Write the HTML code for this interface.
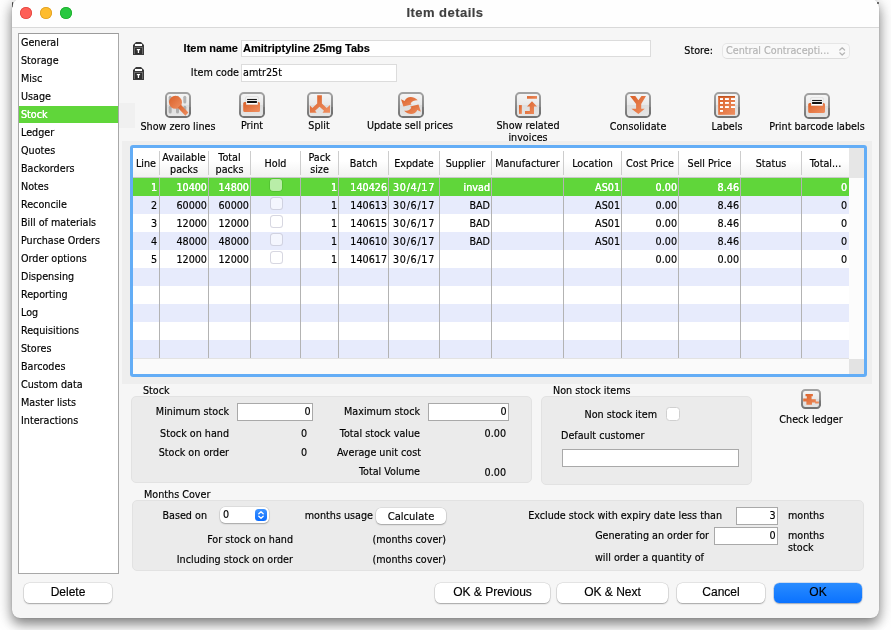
<!DOCTYPE html>
<html><head><meta charset="utf-8"><title>Item details</title><style>
html,body{margin:0;padding:0;}
body{width:891px;height:630px;background:#fff;position:relative;overflow:hidden;font-family:"DejaVu Sans Condensed", "Liberation Sans", sans-serif;font-size:10.7px;color:#000;}
#win{position:absolute;left:12px;top:-2px;width:867px;height:620px;background:#f6f6f6;border-radius:10px 10px 8px 8px;box-shadow:0 0 1px rgba(0,0,0,0.35),0 6px 12px rgba(0,0,0,0.42),0 2px 20px rgba(0,0,0,0.18);overflow:hidden;}
#titlebar{position:absolute;left:0;top:0;width:867px;height:29px;background:#fefefe;border-bottom:1px solid #d9d9d9;}
.t{position:absolute;white-space:nowrap;overflow:visible;-webkit-text-stroke:0.16px;}
#root{position:absolute;left:0;top:0;width:891px;height:630px;will-change:transform;}
</style></head><body>
<div id="root">
<div id="win">
<div id="titlebar"></div>
</div>
<div style="position:absolute;left:20px;top:7px;width:12px;height:12px;border-radius:50%;background:#fe5f57;box-shadow:inset 0 0 0 0.8px #e2463f;"></div>
<div style="position:absolute;left:40px;top:7px;width:12px;height:12px;border-radius:50%;background:#febc2e;box-shadow:inset 0 0 0 0.8px #dfa023;"></div>
<div style="position:absolute;left:60px;top:7px;width:12px;height:12px;border-radius:50%;background:#28c840;box-shadow:inset 0 0 0 0.8px #1dad2b;"></div>
<div class="t " style="left:345px;top:5px;width:200px;height:16px;line-height:16px;text-align:center;font-weight:bold;font-size:13px;color:#404040;letter-spacing:0.45px;font-family:'Liberation Sans',sans-serif;">Item details</div>
<svg style="position:absolute;left:10px;top:0px" width="6" height="10" viewBox="0 0 6 10"><path d="M2 2.400Q2.600 1.600 3.300 2.200L2.700 7.300L2.100 7.300Z" fill="#2a2a2a" opacity="0.85"/></svg>
<div style="position:absolute;left:877px;top:1.5px;width:2px;height:2px;background:rgba(0,0,0,0.7);border-radius:1px;"></div>
<div style="position:absolute;left:119px;top:103px;width:16px;height:25px;background:#f0f0f0;"></div>
<div style="position:absolute;left:122px;top:141px;width:750px;height:243px;background:#eeeeee;"></div>
<div style="position:absolute;left:18px;top:33px;width:101px;height:541px;background:#fff;border:1px solid #a8a8a8;border-top-color:#9c9c9c;box-sizing:border-box;"></div>
<div class="t " style="left:21px;top:34px;width:95px;height:18px;line-height:18px;text-align:left;">General</div>
<div class="t " style="left:21px;top:52px;width:95px;height:18px;line-height:18px;text-align:left;">Storage</div>
<div class="t " style="left:21px;top:70px;width:95px;height:18px;line-height:18px;text-align:left;">Misc</div>
<div class="t " style="left:21px;top:88px;width:95px;height:18px;line-height:18px;text-align:left;">Usage</div>
<div style="position:absolute;left:19px;top:106px;width:99px;height:17px;background:#60d63a;"></div>
<div class="t " style="left:21px;top:106px;width:95px;height:18px;line-height:18px;text-align:left;color:#fff;text-shadow:0 0 0.6px #fff;">Stock</div>
<div class="t " style="left:21px;top:124px;width:95px;height:18px;line-height:18px;text-align:left;">Ledger</div>
<div class="t " style="left:21px;top:142px;width:95px;height:18px;line-height:18px;text-align:left;">Quotes</div>
<div class="t " style="left:21px;top:160px;width:95px;height:18px;line-height:18px;text-align:left;">Backorders</div>
<div class="t " style="left:21px;top:178px;width:95px;height:18px;line-height:18px;text-align:left;">Notes</div>
<div class="t " style="left:21px;top:196px;width:95px;height:18px;line-height:18px;text-align:left;">Reconcile</div>
<div class="t " style="left:21px;top:214px;width:95px;height:18px;line-height:18px;text-align:left;">Bill of materials</div>
<div class="t " style="left:21px;top:232px;width:95px;height:18px;line-height:18px;text-align:left;">Purchase Orders</div>
<div class="t " style="left:21px;top:250px;width:95px;height:18px;line-height:18px;text-align:left;">Order options</div>
<div class="t " style="left:21px;top:268px;width:95px;height:18px;line-height:18px;text-align:left;">Dispensing</div>
<div class="t " style="left:21px;top:286px;width:95px;height:18px;line-height:18px;text-align:left;">Reporting</div>
<div class="t " style="left:21px;top:304px;width:95px;height:18px;line-height:18px;text-align:left;">Log</div>
<div class="t " style="left:21px;top:322px;width:95px;height:18px;line-height:18px;text-align:left;">Requisitions</div>
<div class="t " style="left:21px;top:340px;width:95px;height:18px;line-height:18px;text-align:left;">Stores</div>
<div class="t " style="left:21px;top:358px;width:95px;height:18px;line-height:18px;text-align:left;">Barcodes</div>
<div class="t " style="left:21px;top:376px;width:95px;height:18px;line-height:18px;text-align:left;">Custom data</div>
<div class="t " style="left:21px;top:394px;width:95px;height:18px;line-height:18px;text-align:left;">Master lists</div>
<div class="t " style="left:21px;top:412px;width:95px;height:18px;line-height:18px;text-align:left;">Interactions</div>
<svg style="position:absolute;left:133px;top:42px" width="11" height="13" viewBox="0 0 11 13"><path d="M3 0h5l3 3v10H0V3z" fill="#3a3a3a"/><rect x="2" y="2" width="7" height="2" fill="#fff"/><rect x="1" y="5" width="9" height="7" fill="#6a6a6a"/><rect x="2" y="6" width="7" height="6" fill="#2e2e2e"/><path d="M3.800 7h3.300v1.200h-1v2.700h-1.300v-2.700h-1z" fill="#fff"/></svg>
<svg style="position:absolute;left:133px;top:67px" width="11" height="13" viewBox="0 0 11 13"><path d="M3 0h5l3 3v10H0V3z" fill="#3a3a3a"/><rect x="2" y="2" width="7" height="2" fill="#fff"/><rect x="1" y="5" width="9" height="7" fill="#6a6a6a"/><rect x="2" y="6" width="7" height="6" fill="#2e2e2e"/><path d="M3.800 7h3.300v1.200h-1v2.700h-1.300v-2.700h-1z" fill="#fff"/></svg>
<div class="t " style="left:150px;top:41px;width:88px;height:15px;line-height:15px;text-align:right;font-weight:bold;font-family:'Liberation Sans',sans-serif;font-size:11px;">Item name</div>
<div class="t " style="left:151px;top:65px;width:88px;height:15px;line-height:15px;text-align:right;">Item code</div>
<div style="position:absolute;left:241px;top:40px;width:410px;height:17px;background:#fff;border:1px solid #dcdcdc;box-sizing:border-box;"></div>
<div class="t " style="left:243px;top:41px;width:300px;height:15px;line-height:15px;text-align:left;font-weight:bold;font-family:'Liberation Sans',sans-serif;font-size:11px;">Amitriptyline 25mg Tabs</div>
<div style="position:absolute;left:241px;top:64px;width:156px;height:18px;background:#fff;border:1px solid #dcdcdc;box-sizing:border-box;"></div>
<div class="t " style="left:243px;top:65px;width:150px;height:15px;line-height:15px;text-align:left;">amtr25t</div>
<div class="t " style="left:660px;top:43px;width:53px;height:15px;line-height:15px;text-align:right;">Store:</div>
<div style="position:absolute;left:722px;top:43px;width:128px;height:16px;background:#f9f9f9;border:1px solid #e6e6e6;border-bottom-color:#dcdcdc;border-radius:5px;box-sizing:border-box;"></div>
<div class="t " style="left:726px;top:43.5px;width:110px;height:14px;line-height:14px;text-align:left;color:#b4b4b4;">Central Contracepti...</div>
<svg style="position:absolute;left:838px;top:45.500px" width="8" height="11" viewBox="0 0 8 11"><path d="M1.800 4L4.200 1.800L6.600 4M1.800 6.800L4.200 9L6.600 6.800" fill="none" stroke="#b4b4b4" stroke-width="1.200" stroke-linecap="round" stroke-linejoin="round"/></svg>
<svg width="0" height="0" style="position:absolute"><defs>
<linearGradient id="gb" x1="0" y1="0" x2="0" y2="1"><stop offset="0" stop-color="#a2a2a2"/><stop offset="0.5" stop-color="#8c8c8c"/><stop offset="1" stop-color="#727272"/></linearGradient>
<linearGradient id="gf" x1="0" y1="0" x2="0" y2="1"><stop offset="0" stop-color="#f6f6f6"/><stop offset="0.52" stop-color="#e8e8e8"/><stop offset="0.52" stop-color="#dedede"/><stop offset="1" stop-color="#e6e6e6"/></linearGradient>
<linearGradient id="go" x1="0" y1="0" x2="1" y2="1"><stop offset="0" stop-color="#da6028"/><stop offset="1" stop-color="#ef9062"/></linearGradient>
</defs></svg>
<svg style="position:absolute;left:165px;top:92px;overflow:visible" width="26" height="26" viewBox="0 0 26 26"><rect x="0" y="0" width="26" height="26" rx="4.8" fill="#fff" opacity="0.55"/><rect x="1" y="1" width="24" height="24" rx="3.8" fill="url(#gf)" stroke="url(#gb)" stroke-width="2"/><rect x="24" y="15.079999999999998" width="2" height="7.0200000000000005" fill="#666" opacity="0.4"/><g opacity="0.6" fill="#8c8c8c"><rect x="3.700" y="3.800" width="3" height="7.600" rx="1.500"/><rect x="11" y="3.800" width="3" height="7.600" rx="1.500"/><rect x="18.300" y="3.800" width="3" height="7.600" rx="1.500"/><rect x="3.700" y="13.800" width="3" height="7.600" rx="1.500"/><rect x="11" y="13.800" width="3" height="7.600" rx="1.500"/><rect x="18.300" y="13.800" width="3" height="7.600" rx="1.500"/></g><circle cx="10.500" cy="10.300" r="6.500" fill="url(#go)"/><path d="M12.800 15.800L15.900 12.800L23.300 20.600L20.400 23.700z" fill="url(#go)"/></svg>
<svg style="position:absolute;left:239px;top:92px;overflow:visible" width="26" height="26" viewBox="0 0 26 26"><rect x="0" y="0" width="26" height="26" rx="4.8" fill="#fff" opacity="0.55"/><rect x="1" y="1" width="24" height="24" rx="3.8" fill="url(#gf)" stroke="url(#gb)" stroke-width="2"/><rect x="24" y="15.079999999999998" width="2" height="7.0200000000000005" fill="#666" opacity="0.4"/><path d="M6.900 4.900h12.200l-0.300 8H7.200z" fill="#fff" stroke="#c4c4c4" stroke-width="0.500"/><rect x="8.100" y="6.900" width="9.800" height="1.200" fill="#1a1a1a"/><rect x="8.100" y="9" width="9.800" height="2" fill="#111"/><path d="M4.200 11.500a1.500 1.500 0 0 1 1.500-1.500h1.400v2.800h11.800v-2.800h0.600a1.500 1.500 0 0 1 1.500 1.500v6.900a1.500 1.500 0 0 1-1.500 1.500H5.700a1.500 1.500 0 0 1-1.500-1.500z" fill="url(#go)"/></svg>
<svg style="position:absolute;left:307px;top:92px;overflow:visible" width="26" height="26" viewBox="0 0 26 26"><rect x="0" y="0" width="26" height="26" rx="4.8" fill="#fff" opacity="0.55"/><rect x="1" y="1" width="24" height="24" rx="3.8" fill="url(#gf)" stroke="url(#gb)" stroke-width="2"/><rect x="24" y="15.079999999999998" width="2" height="7.0200000000000005" fill="#666" opacity="0.4"/><path d="M10.200 3.300H14.900V11.600L19.700 16L23 13V20.700H15.500L17 18.800L12.550 14.800L8.100 18.800L9.600 20.700H2.900V13.600L5.400 16L10.200 11.600Z" fill="url(#go)"/></svg>
<svg style="position:absolute;left:398px;top:92px;overflow:visible" width="26" height="26" viewBox="0 0 26 26"><rect x="0" y="0" width="26" height="26" rx="4.8" fill="#fff" opacity="0.55"/><rect x="1" y="1" width="24" height="24" rx="3.8" fill="url(#gf)" stroke="url(#gb)" stroke-width="2"/><rect x="24" y="15.079999999999998" width="2" height="7.0200000000000005" fill="#666" opacity="0.4"/><path d="M3 7.300L6.600 9C8.600 4.600 14.500 3.200 19.800 8.300C16.500 8.200 14 9 12.600 11.400L13.600 12.600L5.400 14.500Z" fill="url(#go)"/><path d="M22.900 19.800L19.300 18.100C17.300 22.500 11.400 23.900 6.100 18.800C9.400 18.900 11.900 18.100 13.300 15.700L12.300 14.500L20.500 12.600Z" fill="url(#go)"/></svg>
<svg style="position:absolute;left:515px;top:92px;overflow:visible" width="26" height="26" viewBox="0 0 26 26"><rect x="0" y="0" width="26" height="26" rx="4.8" fill="#fff" opacity="0.55"/><rect x="1" y="1" width="24" height="24" rx="3.8" fill="url(#gf)" stroke="url(#gb)" stroke-width="2"/><rect x="24" y="15.079999999999998" width="2" height="7.0200000000000005" fill="#666" opacity="0.4"/><rect x="12" y="4.100" width="10" height="2.700" fill="url(#go)"/><rect x="4" y="13.100" width="2.900" height="8.800" fill="url(#go)"/><path d="M17 9.200L22 14.500H19V21.900H10V19.100H14.800V14.500H12Z" fill="url(#go)"/></svg>
<svg style="position:absolute;left:625px;top:92px;overflow:visible" width="26" height="26" viewBox="0 0 26 26"><rect x="0" y="0" width="26" height="26" rx="4.8" fill="#fff" opacity="0.55"/><rect x="1" y="1" width="24" height="24" rx="3.8" fill="url(#gf)" stroke="url(#gb)" stroke-width="2"/><rect x="24" y="15.079999999999998" width="2" height="7.0200000000000005" fill="#666" opacity="0.4"/><path d="M5 4.100H10.300L13.400 8.300L16.500 4.100H21L16.200 12V16.800H19.800L13.400 22.100L6.400 16.800H11.100V12Z" fill="url(#go)"/></svg>
<svg style="position:absolute;left:714px;top:92px;overflow:visible" width="26" height="26" viewBox="0 0 26 26"><rect x="0" y="0" width="26" height="26" rx="4.8" fill="#fff" opacity="0.55"/><rect x="1" y="1" width="24" height="24" rx="3.8" fill="url(#gf)" stroke="url(#gb)" stroke-width="2"/><rect x="24" y="15.079999999999998" width="2" height="7.0200000000000005" fill="#666" opacity="0.4"/><rect x="4.200" y="4.100" width="16.800" height="18.700" fill="url(#go)"/><rect x="4.200" y="4.100" width="16.800" height="1.100" fill="#b44c1b" opacity="0.85"/><rect x="6" y="6.1" width="3" height="1.900" fill="#fff"/><rect x="11" y="6.1" width="3.9" height="1.900" fill="#fff"/><rect x="17" y="6.1" width="4" height="1.900" fill="#fff"/><rect x="6" y="10" width="3" height="1.900" fill="#fff"/><rect x="11" y="10" width="3.9" height="1.900" fill="#fff"/><rect x="17" y="10" width="4" height="1.900" fill="#fff"/><rect x="6" y="14.1" width="3" height="1.900" fill="#fff"/><rect x="11" y="14.1" width="3.9" height="1.900" fill="#fff"/><rect x="17" y="14.1" width="4" height="1.900" fill="#fff"/><rect x="6" y="18" width="3" height="1.900" fill="#fff"/></svg>
<svg style="position:absolute;left:804px;top:93px;overflow:visible" width="26" height="26" viewBox="0 0 26 26"><rect x="0" y="0" width="26" height="26" rx="4.8" fill="#fff" opacity="0.55"/><rect x="1" y="1" width="24" height="24" rx="3.8" fill="url(#gf)" stroke="url(#gb)" stroke-width="2"/><rect x="24" y="15.079999999999998" width="2" height="7.0200000000000005" fill="#666" opacity="0.4"/><path d="M6.900 4.900h12.200l-0.300 8H7.200z" fill="#fff" stroke="#c4c4c4" stroke-width="0.500"/><rect x="8.100" y="6.900" width="9.800" height="1.200" fill="#1a1a1a"/><rect x="8.100" y="9" width="9.800" height="2" fill="#111"/><path d="M4.200 11.500a1.500 1.500 0 0 1 1.500-1.500h1.400v2.800h11.800v-2.800h0.600a1.500 1.500 0 0 1 1.500 1.500v6.900a1.500 1.500 0 0 1-1.500 1.500H5.700a1.500 1.500 0 0 1-1.500-1.500z" fill="url(#go)"/></svg>
<div class="t " style="left:108px;top:120px;width:140px;height:14px;line-height:14px;text-align:center;">Show zero lines</div>
<div class="t " style="left:182px;top:119px;width:140px;height:14px;line-height:14px;text-align:center;">Print</div>
<div class="t " style="left:249px;top:119px;width:140px;height:14px;line-height:14px;text-align:center;">Split</div>
<div class="t " style="left:340px;top:119px;width:140px;height:14px;line-height:14px;text-align:center;">Update sell prices</div>
<div class="t " style="left:458px;top:119px;width:140px;height:14px;line-height:14px;text-align:center;">Show related</div>
<div class="t " style="left:458px;top:131px;width:140px;height:14px;line-height:14px;text-align:center;">invoices</div>
<div class="t " style="left:568px;top:120px;width:140px;height:14px;line-height:14px;text-align:center;">Consolidate</div>
<div class="t " style="left:657px;top:120px;width:140px;height:14px;line-height:14px;text-align:center;">Labels</div>
<div class="t " style="left:747px;top:120px;width:140px;height:14px;line-height:14px;text-align:center;">Print barcode labels</div>
<div style="position:absolute;left:130px;top:145px;width:737px;height:232px;background:#63adf6;border-radius:3px;"></div>
<div style="position:absolute;left:133px;top:148px;width:731px;height:226px;background:#fcfcfc;"></div>
<div style="position:absolute;left:133px;top:148px;width:716px;height:29px;background:linear-gradient(#ffffff,#ffffff 45%,#f1f1f1);"></div>
<div style="position:absolute;left:133px;top:177px;width:716px;height:1px;background:#c9c9c9;"></div>
<div style="position:absolute;left:849px;top:148px;width:15px;height:30px;background:#e6e6e6;"></div>
<div style="position:absolute;left:849px;top:359px;width:15px;height:15px;background:#e3e3e3;"></div>
<div style="position:absolute;left:133px;top:359px;width:716px;height:15px;background:#fafafa;"></div>
<div style="position:absolute;left:133px;top:358px;width:716px;height:1px;background:#e2e2e2;"></div>
<div style="position:absolute;left:133px;top:178px;width:716px;height:18px;background:#60d63a;"></div>
<div style="position:absolute;left:133px;top:196px;width:716px;height:18px;background:#e7ebfc;"></div>
<div style="position:absolute;left:133px;top:214px;width:716px;height:18px;background:#ffffff;"></div>
<div style="position:absolute;left:133px;top:232px;width:716px;height:18px;background:#e7ebfc;"></div>
<div style="position:absolute;left:133px;top:250px;width:716px;height:18px;background:#ffffff;"></div>
<div style="position:absolute;left:133px;top:268px;width:716px;height:18px;background:#e7ebfc;"></div>
<div style="position:absolute;left:133px;top:286px;width:716px;height:18px;background:#ffffff;"></div>
<div style="position:absolute;left:133px;top:304px;width:716px;height:18px;background:#e7ebfc;"></div>
<div style="position:absolute;left:133px;top:322px;width:716px;height:18px;background:#ffffff;"></div>
<div style="position:absolute;left:133px;top:340px;width:716px;height:18px;background:#e7ebfc;"></div>
<div style="position:absolute;left:159px;top:151px;width:1px;height:24px;background:#cdcdcd;"></div>
<div style="position:absolute;left:159px;top:178px;width:1px;height:180px;background:#b3b3b3;"></div>
<div style="position:absolute;left:208px;top:151px;width:1px;height:24px;background:#cdcdcd;"></div>
<div style="position:absolute;left:208px;top:178px;width:1px;height:180px;background:#b3b3b3;"></div>
<div style="position:absolute;left:250px;top:151px;width:1px;height:24px;background:#cdcdcd;"></div>
<div style="position:absolute;left:250px;top:178px;width:1px;height:180px;background:#b3b3b3;"></div>
<div style="position:absolute;left:300px;top:151px;width:1px;height:24px;background:#cdcdcd;"></div>
<div style="position:absolute;left:300px;top:178px;width:1px;height:180px;background:#b3b3b3;"></div>
<div style="position:absolute;left:338px;top:151px;width:1px;height:24px;background:#cdcdcd;"></div>
<div style="position:absolute;left:338px;top:178px;width:1px;height:180px;background:#b3b3b3;"></div>
<div style="position:absolute;left:388px;top:151px;width:1px;height:24px;background:#cdcdcd;"></div>
<div style="position:absolute;left:388px;top:178px;width:1px;height:180px;background:#b3b3b3;"></div>
<div style="position:absolute;left:439px;top:151px;width:1px;height:24px;background:#cdcdcd;"></div>
<div style="position:absolute;left:439px;top:178px;width:1px;height:180px;background:#b3b3b3;"></div>
<div style="position:absolute;left:491px;top:151px;width:1px;height:24px;background:#cdcdcd;"></div>
<div style="position:absolute;left:491px;top:178px;width:1px;height:180px;background:#b3b3b3;"></div>
<div style="position:absolute;left:563px;top:151px;width:1px;height:24px;background:#cdcdcd;"></div>
<div style="position:absolute;left:563px;top:178px;width:1px;height:180px;background:#b3b3b3;"></div>
<div style="position:absolute;left:621px;top:151px;width:1px;height:24px;background:#cdcdcd;"></div>
<div style="position:absolute;left:621px;top:178px;width:1px;height:180px;background:#b3b3b3;"></div>
<div style="position:absolute;left:678px;top:151px;width:1px;height:24px;background:#cdcdcd;"></div>
<div style="position:absolute;left:678px;top:178px;width:1px;height:180px;background:#b3b3b3;"></div>
<div style="position:absolute;left:740px;top:151px;width:1px;height:24px;background:#cdcdcd;"></div>
<div style="position:absolute;left:740px;top:178px;width:1px;height:180px;background:#b3b3b3;"></div>
<div style="position:absolute;left:801px;top:151px;width:1px;height:24px;background:#cdcdcd;"></div>
<div style="position:absolute;left:801px;top:178px;width:1px;height:180px;background:#b3b3b3;"></div>
<div style="position:absolute;left:849px;top:151px;width:0px;height:0px;"></div>
<div class="t " style="left:133px;top:158px;width:26px;height:12px;line-height:12px;text-align:center;">Line</div>
<div class="t " style="left:160px;top:152px;width:48px;height:12px;line-height:12px;text-align:center;">Available</div>
<div class="t " style="left:160px;top:164px;width:48px;height:12px;line-height:12px;text-align:center;">packs</div>
<div class="t " style="left:209px;top:152px;width:41px;height:12px;line-height:12px;text-align:center;">Total</div>
<div class="t " style="left:209px;top:164px;width:41px;height:12px;line-height:12px;text-align:center;">packs</div>
<div class="t " style="left:251px;top:158px;width:49px;height:12px;line-height:12px;text-align:center;">Hold</div>
<div class="t " style="left:301px;top:152px;width:37px;height:12px;line-height:12px;text-align:center;">Pack</div>
<div class="t " style="left:301px;top:164px;width:37px;height:12px;line-height:12px;text-align:center;">size</div>
<div class="t " style="left:339px;top:158px;width:49px;height:12px;line-height:12px;text-align:center;">Batch</div>
<div class="t " style="left:389px;top:158px;width:50px;height:12px;line-height:12px;text-align:center;">Expdate</div>
<div class="t " style="left:440px;top:158px;width:51px;height:12px;line-height:12px;text-align:center;">Supplier</div>
<div class="t " style="left:492px;top:158px;width:71px;height:12px;line-height:12px;text-align:center;">Manufacturer</div>
<div class="t " style="left:564px;top:158px;width:57px;height:12px;line-height:12px;text-align:center;">Location</div>
<div class="t " style="left:622px;top:158px;width:56px;height:12px;line-height:12px;text-align:center;">Cost Price</div>
<div class="t " style="left:679px;top:158px;width:61px;height:12px;line-height:12px;text-align:center;">Sell Price</div>
<div class="t " style="left:741px;top:158px;width:60px;height:12px;line-height:12px;text-align:center;">Status</div>
<div class="t " style="left:802px;top:158px;width:47px;height:12px;line-height:12px;text-align:center;">Total...</div>
<div class="t " style="left:133px;top:179px;width:24px;height:18px;line-height:18px;text-align:right;color:#fff;text-shadow:0 0 0.6px #fff;">1</div>
<div class="t " style="left:160px;top:179px;width:47px;height:18px;line-height:18px;text-align:right;color:#fff;text-shadow:0 0 0.6px #fff;">10400</div>
<div class="t " style="left:209px;top:179px;width:40px;height:18px;line-height:18px;text-align:right;color:#fff;text-shadow:0 0 0.6px #fff;">14800</div>
<div style="position:absolute;left:270px;top:179px;width:12px;height:12px;border-radius:3px;background:rgba(255,255,255,0.56);box-shadow:0 0 0 0.5px rgba(30,110,20,0.35);box-sizing:border-box;"></div>
<div class="t " style="left:301px;top:179px;width:36px;height:18px;line-height:18px;text-align:right;color:#fff;text-shadow:0 0 0.6px #fff;">1</div>
<div class="t " style="left:339px;top:179px;width:48px;height:18px;line-height:18px;text-align:right;color:#fff;text-shadow:0 0 0.6px #fff;">140426</div>
<div class="t " style="left:393px;top:179px;width:46px;height:18px;line-height:18px;text-align:left;color:#fff;text-shadow:0 0 0.6px #fff;letter-spacing:0.7px;">30/4/17</div>
<div class="t " style="left:440px;top:179px;width:50px;height:18px;line-height:18px;text-align:right;color:#fff;text-shadow:0 0 0.6px #fff;">invad</div>
<div class="t " style="left:564px;top:179px;width:56px;height:18px;line-height:18px;text-align:right;color:#fff;text-shadow:0 0 0.6px #fff;">AS01</div>
<div class="t " style="left:622px;top:179px;width:55px;height:18px;line-height:18px;text-align:right;color:#fff;text-shadow:0 0 0.6px #fff;">0.00</div>
<div class="t " style="left:679px;top:179px;width:60px;height:18px;line-height:18px;text-align:right;color:#fff;text-shadow:0 0 0.6px #fff;">8.46</div>
<div class="t " style="left:802px;top:179px;width:45px;height:18px;line-height:18px;text-align:right;color:#fff;text-shadow:0 0 0.6px #fff;">0</div>
<div class="t " style="left:133px;top:197px;width:24px;height:18px;line-height:18px;text-align:right;">2</div>
<div class="t " style="left:160px;top:197px;width:47px;height:18px;line-height:18px;text-align:right;">60000</div>
<div class="t " style="left:209px;top:197px;width:40px;height:18px;line-height:18px;text-align:right;">60000</div>
<div style="position:absolute;left:269.5px;top:196.5px;width:13px;height:13px;border-radius:3.500px;background:rgba(255,255,255,0.55);border:1px solid rgba(150,150,175,0.38);box-sizing:border-box;"></div>
<div class="t " style="left:301px;top:197px;width:36px;height:18px;line-height:18px;text-align:right;">1</div>
<div class="t " style="left:339px;top:197px;width:48px;height:18px;line-height:18px;text-align:right;">140613</div>
<div class="t " style="left:393px;top:197px;width:46px;height:18px;line-height:18px;text-align:left;letter-spacing:0.7px;">30/6/17</div>
<div class="t " style="left:440px;top:197px;width:50px;height:18px;line-height:18px;text-align:right;">BAD</div>
<div class="t " style="left:564px;top:197px;width:56px;height:18px;line-height:18px;text-align:right;">AS01</div>
<div class="t " style="left:622px;top:197px;width:55px;height:18px;line-height:18px;text-align:right;">0.00</div>
<div class="t " style="left:679px;top:197px;width:60px;height:18px;line-height:18px;text-align:right;">8.46</div>
<div class="t " style="left:802px;top:197px;width:45px;height:18px;line-height:18px;text-align:right;">0</div>
<div class="t " style="left:133px;top:215px;width:24px;height:18px;line-height:18px;text-align:right;">3</div>
<div class="t " style="left:160px;top:215px;width:47px;height:18px;line-height:18px;text-align:right;">12000</div>
<div class="t " style="left:209px;top:215px;width:40px;height:18px;line-height:18px;text-align:right;">12000</div>
<div style="position:absolute;left:269.5px;top:214.5px;width:13px;height:13px;border-radius:3.500px;background:rgba(255,255,255,0.55);border:1px solid rgba(150,150,175,0.38);box-sizing:border-box;"></div>
<div class="t " style="left:301px;top:215px;width:36px;height:18px;line-height:18px;text-align:right;">1</div>
<div class="t " style="left:339px;top:215px;width:48px;height:18px;line-height:18px;text-align:right;">140615</div>
<div class="t " style="left:393px;top:215px;width:46px;height:18px;line-height:18px;text-align:left;letter-spacing:0.7px;">30/6/17</div>
<div class="t " style="left:440px;top:215px;width:50px;height:18px;line-height:18px;text-align:right;">BAD</div>
<div class="t " style="left:564px;top:215px;width:56px;height:18px;line-height:18px;text-align:right;">AS01</div>
<div class="t " style="left:622px;top:215px;width:55px;height:18px;line-height:18px;text-align:right;">0.00</div>
<div class="t " style="left:679px;top:215px;width:60px;height:18px;line-height:18px;text-align:right;">8.46</div>
<div class="t " style="left:802px;top:215px;width:45px;height:18px;line-height:18px;text-align:right;">0</div>
<div class="t " style="left:133px;top:233px;width:24px;height:18px;line-height:18px;text-align:right;">4</div>
<div class="t " style="left:160px;top:233px;width:47px;height:18px;line-height:18px;text-align:right;">48000</div>
<div class="t " style="left:209px;top:233px;width:40px;height:18px;line-height:18px;text-align:right;">48000</div>
<div style="position:absolute;left:269.5px;top:232.5px;width:13px;height:13px;border-radius:3.500px;background:rgba(255,255,255,0.55);border:1px solid rgba(150,150,175,0.38);box-sizing:border-box;"></div>
<div class="t " style="left:301px;top:233px;width:36px;height:18px;line-height:18px;text-align:right;">1</div>
<div class="t " style="left:339px;top:233px;width:48px;height:18px;line-height:18px;text-align:right;">140610</div>
<div class="t " style="left:393px;top:233px;width:46px;height:18px;line-height:18px;text-align:left;letter-spacing:0.7px;">30/6/17</div>
<div class="t " style="left:440px;top:233px;width:50px;height:18px;line-height:18px;text-align:right;">BAD</div>
<div class="t " style="left:564px;top:233px;width:56px;height:18px;line-height:18px;text-align:right;">AS01</div>
<div class="t " style="left:622px;top:233px;width:55px;height:18px;line-height:18px;text-align:right;">0.00</div>
<div class="t " style="left:679px;top:233px;width:60px;height:18px;line-height:18px;text-align:right;">8.46</div>
<div class="t " style="left:802px;top:233px;width:45px;height:18px;line-height:18px;text-align:right;">0</div>
<div class="t " style="left:133px;top:251px;width:24px;height:18px;line-height:18px;text-align:right;">5</div>
<div class="t " style="left:160px;top:251px;width:47px;height:18px;line-height:18px;text-align:right;">12000</div>
<div class="t " style="left:209px;top:251px;width:40px;height:18px;line-height:18px;text-align:right;">12000</div>
<div style="position:absolute;left:269.5px;top:250.5px;width:13px;height:13px;border-radius:3.500px;background:rgba(255,255,255,0.55);border:1px solid rgba(150,150,175,0.38);box-sizing:border-box;"></div>
<div class="t " style="left:301px;top:251px;width:36px;height:18px;line-height:18px;text-align:right;">1</div>
<div class="t " style="left:339px;top:251px;width:48px;height:18px;line-height:18px;text-align:right;">140617</div>
<div class="t " style="left:393px;top:251px;width:46px;height:18px;line-height:18px;text-align:left;letter-spacing:0.7px;">30/6/17</div>
<div class="t " style="left:622px;top:251px;width:55px;height:18px;line-height:18px;text-align:right;">0.00</div>
<div class="t " style="left:679px;top:251px;width:60px;height:18px;line-height:18px;text-align:right;">0.00</div>
<div class="t " style="left:802px;top:251px;width:45px;height:18px;line-height:18px;text-align:right;">0</div>
<div class="t " style="left:143px;top:384px;width:100px;height:14px;line-height:14px;text-align:left;">Stock</div>
<div style="position:absolute;left:131px;top:396px;width:401px;height:87px;background:#ebebeb;border:1px solid #e2e2e2;border-radius:5px;box-sizing:border-box;"></div>
<div class="t " style="left:129px;top:405px;width:100px;height:14px;line-height:14px;text-align:right;">Minimum stock</div>
<div style="position:absolute;left:237px;top:403px;width:76px;height:18px;background:#fff;border:1px solid #a9a9a9;box-sizing:border-box;"></div>
<div class="t " style="left:237px;top:403px;width:73.5px;height:18px;line-height:18px;text-align:right;">0</div>
<div class="t " style="left:129px;top:427px;width:100px;height:14px;line-height:14px;text-align:right;">Stock on hand</div>
<div class="t " style="left:250px;top:427px;width:57px;height:14px;line-height:14px;text-align:right;">0</div>
<div class="t " style="left:129px;top:446px;width:100px;height:14px;line-height:14px;text-align:right;">Stock on order</div>
<div class="t " style="left:250px;top:446px;width:57px;height:14px;line-height:14px;text-align:right;">0</div>
<div class="t " style="left:300px;top:405px;width:120px;height:14px;line-height:14px;text-align:right;">Maximum stock</div>
<div style="position:absolute;left:428px;top:403px;width:81px;height:18px;background:#fff;border:1px solid #a9a9a9;box-sizing:border-box;"></div>
<div class="t " style="left:428px;top:403px;width:78.5px;height:18px;line-height:18px;text-align:right;">0</div>
<div class="t " style="left:300px;top:427px;width:120px;height:14px;line-height:14px;text-align:right;">Total stock value</div>
<div class="t " style="left:440px;top:427px;width:66px;height:14px;line-height:14px;text-align:right;">0.00</div>
<div class="t " style="left:300px;top:446px;width:121px;height:14px;line-height:14px;text-align:right;">Average unit cost</div>
<div class="t " style="left:300px;top:465px;width:120px;height:14px;line-height:14px;text-align:right;">Total Volume</div>
<div class="t " style="left:440px;top:466px;width:66px;height:14px;line-height:14px;text-align:right;">0.00</div>
<div class="t " style="left:553px;top:384px;width:120px;height:14px;line-height:14px;text-align:left;">Non stock items</div>
<div style="position:absolute;left:541px;top:396px;width:211px;height:89px;background:#ebebeb;border:1px solid #e2e2e2;border-radius:5px;box-sizing:border-box;"></div>
<div class="t " style="left:560px;top:408px;width:97px;height:14px;line-height:14px;text-align:right;">Non stock item</div>
<div style="position:absolute;left:666px;top:407px;width:14px;height:14px;background:#fff;border:1px solid #d0d0d0;border-radius:3.5px;box-sizing:border-box;"></div>
<div class="t " style="left:561px;top:429px;width:120px;height:14px;line-height:14px;text-align:left;">Default customer</div>
<div style="position:absolute;left:562px;top:449px;width:177px;height:18px;background:#fff;border:1px solid #a9a9a9;box-sizing:border-box;"></div>
<svg style="position:absolute;left:801px;top:389px;overflow:visible" width="20" height="20" viewBox="0 0 20 20"><rect x="0" y="0" width="20" height="20" rx="4.2" fill="#fff" opacity="0.55"/><rect x="1" y="1" width="18" height="18" rx="3.2" fill="url(#gf)" stroke="url(#gb)" stroke-width="2"/><rect x="18" y="11.6" width="2" height="5.4" fill="#666" opacity="0.4"/><path d="M4.500 4.900H11.900V7.200H10.600V10.300H14.800V12.500H17.900V14.500H14.200V13.400H11V15.700H5.400V12.500H2.200V9.400H5.800V7.200H4.500Z" fill="url(#go)"/></svg>
<div class="t " style="left:760px;top:413px;width:102px;height:14px;line-height:14px;text-align:center;">Check ledger</div>
<div class="t " style="left:144px;top:488px;width:120px;height:14px;line-height:14px;text-align:left;">Months Cover</div>
<div style="position:absolute;left:132px;top:500px;width:732px;height:71px;background:#ebebeb;border:1px solid #e2e2e2;border-radius:5px;box-sizing:border-box;"></div>
<div class="t " style="left:140px;top:509px;width:67px;height:14px;line-height:14px;text-align:right;">Based on</div>
<div style="position:absolute;left:220px;top:507px;width:49px;height:16px;background:#fff;border-radius:5px;box-shadow:0 0 0 0.5px rgba(0,0,0,0.12),0 1px 1.5px rgba(0,0,0,0.25);"></div>
<div class="t " style="left:223px;top:508px;width:20px;height:14px;line-height:14px;text-align:left;">0</div>
<div style="position:absolute;left:255px;top:509px;width:12px;height:12px;background:linear-gradient(#3f94ff,#0a6cff);border-radius:3.5px;"></div>
<svg style="position:absolute;left:255px;top:509px" width="12" height="12" viewBox="0 0 12 12"><path d="M3.800 4.800L6 2.700L8.200 4.800M3.800 7.200L6 9.300L8.200 7.200" fill="none" stroke="#fff" stroke-width="1.300" stroke-linecap="round" stroke-linejoin="round"/></svg>
<div class="t " style="left:300px;top:509px;width:73px;height:14px;line-height:14px;text-align:right;">months usage</div>
<div style="position:absolute;left:376px;top:508px;width:70px;height:16px;background:#fff;border-radius:5px;box-shadow:0 0 0 0.5px rgba(0,0,0,0.12),0 1px 1.5px rgba(0,0,0,0.25);"></div>
<div class="t " style="left:376px;top:510px;width:70px;height:14px;line-height:14px;text-align:center;font-size:11.1px;">Calculate</div>
<div class="t " style="left:160px;top:533px;width:133px;height:14px;line-height:14px;text-align:right;">For stock on hand</div>
<div class="t " style="left:160px;top:553px;width:133px;height:14px;line-height:14px;text-align:right;">Including stock on order</div>
<div class="t " style="left:360px;top:533px;width:86px;height:14px;line-height:14px;text-align:right;">(months cover)</div>
<div class="t " style="left:360px;top:553px;width:86px;height:14px;line-height:14px;text-align:right;">(months cover)</div>
<div class="t " style="left:500px;top:509px;width:222px;height:14px;line-height:14px;text-align:right;">Exclude stock with expiry date less than</div>
<div style="position:absolute;left:736px;top:507px;width:42px;height:18px;background:#fff;border:1px solid #a9a9a9;box-sizing:border-box;"></div>
<div class="t " style="left:736px;top:507px;width:39.5px;height:18px;line-height:18px;text-align:right;">3</div>
<div class="t " style="left:788px;top:509px;width:60px;height:14px;line-height:14px;text-align:left;">months</div>
<div class="t " style="left:500px;top:529px;width:209px;height:14px;line-height:14px;text-align:right;">Generating an order for</div>
<div style="position:absolute;left:714px;top:527px;width:64px;height:18px;background:#fff;border:1px solid #a9a9a9;box-sizing:border-box;"></div>
<div class="t " style="left:714px;top:527px;width:61.5px;height:18px;line-height:18px;text-align:right;">0</div>
<div class="t " style="left:788px;top:529px;width:60px;height:14px;line-height:14px;text-align:left;">months</div>
<div class="t " style="left:788px;top:541px;width:60px;height:14px;line-height:14px;text-align:left;">stock</div>
<div class="t " style="left:595px;top:551px;width:120px;height:14px;line-height:14px;text-align:left;">will order a quantity of</div>
<div style="position:absolute;left:24px;top:583px;width:88px;height:20px;background:#fff;border-radius:5.5px;box-shadow:0 0 0 0.5px rgba(0,0,0,0.14),0 1px 1.5px rgba(0,0,0,0.28);"></div>
<div class="t " style="left:24px;top:582px;width:88px;height:20px;line-height:20px;text-align:center;font-size:12px;color:#000;font-family:'Liberation Sans',sans-serif;">Delete</div>
<div style="position:absolute;left:435px;top:583px;width:115px;height:20px;background:#fff;border-radius:5.5px;box-shadow:0 0 0 0.5px rgba(0,0,0,0.14),0 1px 1.5px rgba(0,0,0,0.28);"></div>
<div class="t " style="left:435px;top:582px;width:115px;height:20px;line-height:20px;text-align:center;font-size:12px;color:#000;font-family:'Liberation Sans',sans-serif;">OK &amp; Previous</div>
<div style="position:absolute;left:557px;top:583px;width:111px;height:20px;background:#fff;border-radius:5.5px;box-shadow:0 0 0 0.5px rgba(0,0,0,0.14),0 1px 1.5px rgba(0,0,0,0.28);"></div>
<div class="t " style="left:557px;top:582px;width:111px;height:20px;line-height:20px;text-align:center;font-size:12px;color:#000;font-family:'Liberation Sans',sans-serif;">OK &amp; Next</div>
<div style="position:absolute;left:677px;top:583px;width:88px;height:20px;background:#fff;border-radius:5.5px;box-shadow:0 0 0 0.5px rgba(0,0,0,0.14),0 1px 1.5px rgba(0,0,0,0.28);"></div>
<div class="t " style="left:677px;top:582px;width:88px;height:20px;line-height:20px;text-align:center;font-size:12px;color:#000;font-family:'Liberation Sans',sans-serif;">Cancel</div>
<div style="position:absolute;left:774px;top:583px;width:88px;height:20px;background:linear-gradient(#2a8cff,#0a72ff);border-radius:5.5px;box-shadow:0 0 0 0.5px rgba(0,80,200,0.3),0 1px 1.5px rgba(0,0,0,0.25);"></div>
<div class="t " style="left:774px;top:582px;width:88px;height:20px;line-height:20px;text-align:center;font-size:12px;color:#000;font-family:'Liberation Sans',sans-serif;">OK</div>
</div>
</body></html>
